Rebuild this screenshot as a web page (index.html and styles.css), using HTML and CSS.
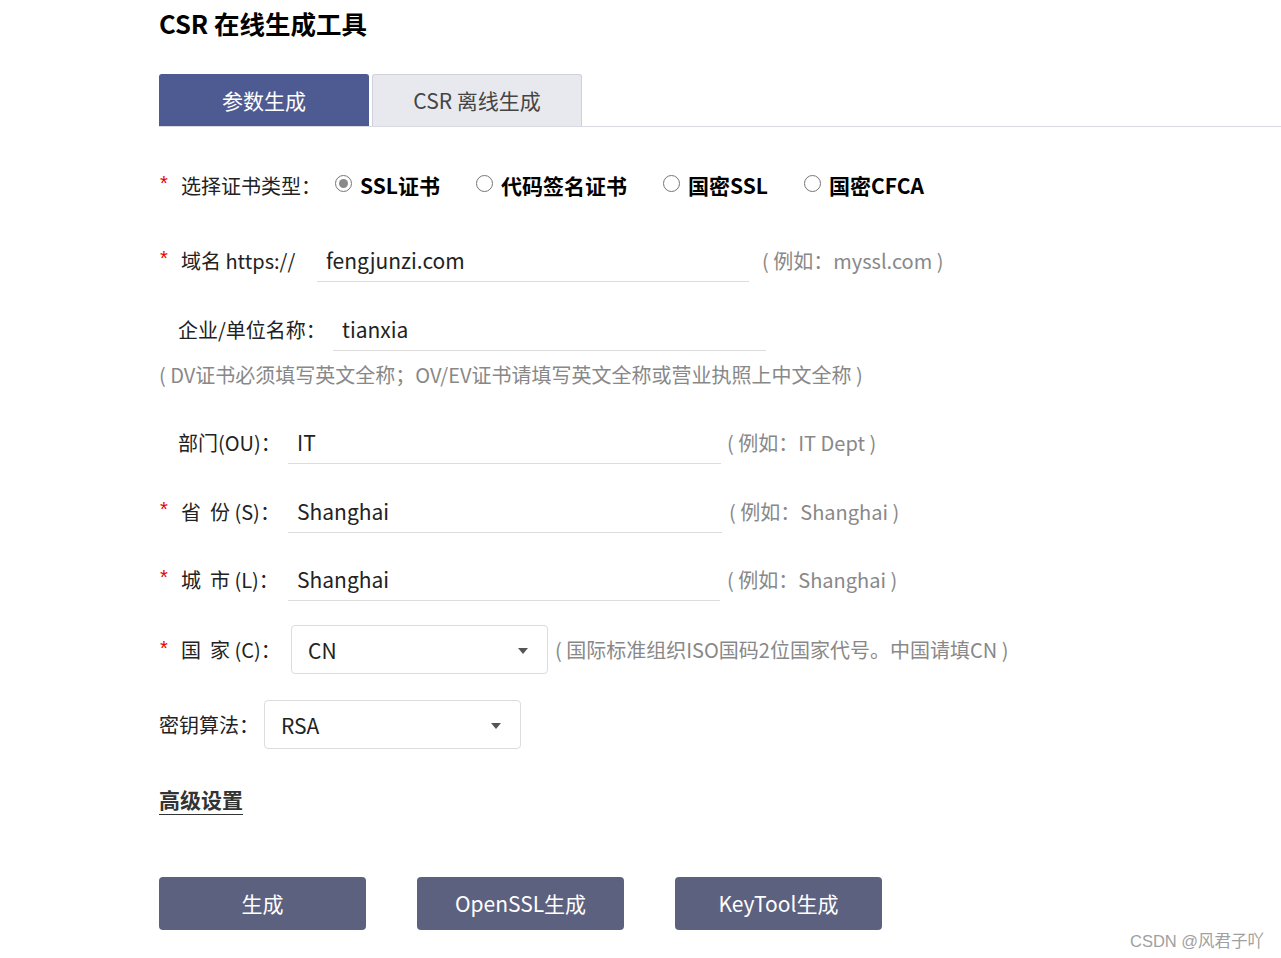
FILE: index.html
```html
<!DOCTYPE html>
<html lang="zh">
<head>
<meta charset="utf-8">
<title>CSR 在线生成工具</title>
<link rel="stylesheet" href="styles.css">
</head>
<body>
<div class="page">
  <h1 class="title">CSR 在线生成工具</h1>
  <div class="tabs">
    <div class="tab active">参数生成</div>
    <div class="tab">CSR 离线生成</div>
  </div>

  <div class="row radio-row">
    <span class="star">*</span>
    <span class="label l-type">选择证书类型：</span>
    <label class="opt"><span class="radio checked"></span><b>SSL证书</b></label>
    <label class="opt"><span class="radio"></span><b>代码签名证书</b></label>
    <label class="opt"><span class="radio"></span><b>国密SSL</b></label>
    <label class="opt"><span class="radio"></span><b>国密CFCA</b></label>
  </div>

  <div class="row r-domain">
    <span class="star">*</span>
    <span class="label l-domain">域名 https://</span>
    <div class="input w432">fengjunzi.com</div>
    <span class="hint">( 例如：myssl.com )</span>
  </div>

  <div class="row r-org">
    <span class="label nostar l-org">企业/单位名称：</span>
    <div class="input w433">tianxia</div>
  </div>
  <div class="note">( DV证书必须填写英文全称；OV/EV证书请填写英文全称或营业执照上中文全称 )</div>

  <div class="row r-ou">
    <span class="label nostar l-ou">部门(OU)：</span>
    <div class="input w433">IT</div>
    <span class="hint">( 例如：IT Dept )</span>
  </div>

  <div class="row r-st">
    <span class="star">*</span>
    <span class="label l-st">省&nbsp;&nbsp;份 (S)：</span>
    <div class="input w434">Shanghai</div>
    <span class="hint">( 例如：Shanghai )</span>
  </div>

  <div class="row r-city">
    <span class="star">*</span>
    <span class="label l-st">城&nbsp;&nbsp;市 (L)：</span>
    <div class="input w432">Shanghai</div>
    <span class="hint">( 例如：Shanghai )</span>
  </div>

  <div class="row r-country">
    <span class="star">*</span>
    <span class="label l-c">国&nbsp;&nbsp;家 (C)：</span>
    <div class="select">CN<span class="caret"></span></div>
    <span class="hint h-c">( 国际标准组织ISO国码2位国家代号。中国请填CN )</span>
  </div>

  <div class="row r-alg">
    <span class="label l-alg">密钥算法：</span>
    <div class="select">RSA<span class="caret"></span></div>
  </div>

  <div class="adv"><span>高级设置</span></div>

  <div class="buttons">
    <button class="btn">生成</button>
    <button class="btn">OpenSSL生成</button>
    <button class="btn">KeyTool生成</button>
  </div>
</div>
<div class="watermark">CSDN @风君子吖</div>
</body>
</html>
```

FILE: styles.css
```css
html, body {
  margin: 0;
  padding: 0;
  background: #fff;
}
body {
  font-family: "Noto Sans CJK SC", "Noto Sans", sans-serif;
  color: #222;
  width: 1281px;
  height: 958px;
  position: relative;
  overflow: hidden;
}
.page {
  padding-left: 159px;
  display: flex;
  flex-direction: column;
}
.title {
  margin: 6px 0 0;
  font-size: 25.5px;
  line-height: 33px;
  font-weight: 700;
  color: #000;
}
.tabs {
  margin-top: 35px;
  display: flex;
  gap: 3px;
  border-bottom: 1px solid #d9d9e1;
  height: 52px;
}
.tab {
  width: 210px;
  height: 52px;
  box-sizing: border-box;
  display: flex;
  align-items: center;
  justify-content: center;
  font-size: 21px;
  padding-bottom: 2px;
  border-radius: 3px 3px 0 0;
  background: #e8e9ef;
  border: 1px solid #cfd0dc;
  border-bottom: none;
  color: #444;
}
.tab.active {
  background: #4e5b92;
  border-color: #4e5b92;
  color: #fff;
}
.row {
  display: flex;
  align-items: center;
  font-size: 20px;
}
.star {
  color: #e60000;
  width: 22px;
  padding-left: 1px;
  box-sizing: border-box;
  font-family: "Liberation Sans", sans-serif;
  font-size: 20px;
  line-height: 20px;
  position: relative;
  top: -2px;
}
.label {
  white-space: nowrap;
  color: #222;
}
.nostar {
  padding-left: 19px;
}
.radio-row {
  margin-top: 38px;
  height: 40px;
}
.l-type { width: 154px; }
.opt {
  display: flex;
  align-items: center;
  margin-right: 36px;
}
.opt b {
  font-weight: 700;
  font-size: 21px;
  color: #000;
}
.radio {
  width: 17px;
  height: 17px;
  box-sizing: border-box;
  border: 1px solid #767676;
  border-radius: 50%;
  margin-right: 8px;
  position: relative;
  top: -2px;
  background: #fff;
}
.radio.checked::after {
  content: "";
  position: absolute;
  left: 3px;
  top: 3px;
  width: 9px;
  height: 9px;
  border-radius: 50%;
  background: #8a8a8a;
}
.input {
  height: 44px;
  box-sizing: border-box;
  border-bottom: 1px solid #dcdcdc;
  display: flex;
  align-items: center;
  padding-left: 9px;
  font-size: 21px;
  color: #222;
}
.w432 { width: 432px; }
.w433 { width: 433px; }
.w434 { width: 434px; }
.hint {
  color: #888;
  margin-left: 13px;
  font-size: 20px;
}
.r-domain { margin-top: 33px; }
.l-domain { width: 136px; }
.r-org { margin-top: 25px; }
.l-org { width: 155px; }
.note {
  margin-top: 10px;
  line-height: 28px;
  font-size: 20px;
  color: #888;
}
.r-ou { margin-top: 31px; }
.l-ou { width: 110px; }
.r-ou .hint { margin-left: 6px; }
.r-st { margin-top: 25px; }
.l-st { width: 107px; }
.r-st .hint { margin-left: 7px; }
.r-city { margin-top: 24px; }
.r-city .hint { margin-left: 7px; }
.r-country { margin-top: 24px; }
.l-c { width: 110px; }
.select {
  width: 257px;
  height: 49px;
  box-sizing: border-box;
  border: 1px solid #dcdcdc;
  border-radius: 4px;
  display: flex;
  align-items: center;
  padding-left: 16px;
  font-size: 21px;
  color: #222;
  position: relative;
}
.caret {
  position: absolute;
  right: 19px;
  top: 22px;
  width: 0;
  height: 0;
  border-left: 5px solid transparent;
  border-right: 5px solid transparent;
  border-top: 6px solid #555;
}
.h-c { margin-left: 7px; }
.r-alg { margin-top: 26px; }
.l-alg { width: 105px; }
.adv {
  margin-top: 36px;
  font-size: 21px;
  line-height: 28px;
  font-weight: 700;
  color: #333;
}
.adv span {
  border-bottom: 1.5px solid #333;
}
.buttons {
  margin-top: 64px;
  display: flex;
  gap: 51px;
}
.btn {
  width: 207px;
  height: 53px;
  border: none;
  border-radius: 4px;
  background: #5d6180;
  color: #fff;
  font-family: inherit;
  font-size: 21px;
  padding: 0 0 2px;
}
.watermark {
  position: absolute;
  left: 1130px;
  top: 928px;
  font-family: "Liberation Sans", "Noto Sans CJK SC", sans-serif;
  font-size: 16.5px;
  color: #a0a0a0;
}
```
